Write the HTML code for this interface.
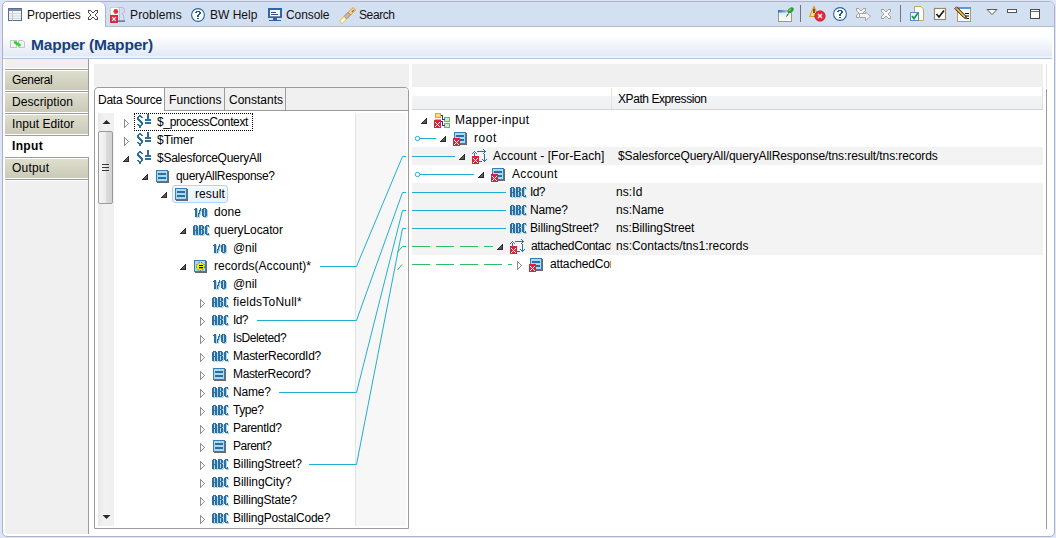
<!DOCTYPE html><html><head><meta charset="utf-8"><style>

*{margin:0;padding:0;box-sizing:border-box}
html,body{width:1056px;height:538px;overflow:hidden;background:#dfe5f5;font-family:"Liberation Sans", sans-serif;font-size:12px;color:#000}
.a{position:absolute}
.t{position:absolute;white-space:nowrap;line-height:18px;height:18px;font-size:12px;letter-spacing:-0.2px}

</style></head><body>

<svg width="0" height="0" style="position:absolute">
<defs>
<symbol id="eo" viewBox="0 0 6 6"><path d="M5 0h1v1h-1zM4 1h2v1h-2zM3 2h3v1h-3zM2 3h4v1h-4zM1 4h5v1h-5zM0 5h6v1h-6z" fill="#2a2a2a"/><path d="M4 2h1v1h-1zM3 3h2v1h-2zM2 4h3v1h-3z" fill="#5a5a5a"/></symbol>
<symbol id="ec" viewBox="0 0 5 9"><path d="M0 0h1v1h-1zM0 1h2v1h-2zM0 2h1v1h-1zM2 2h1v1h-1zM0 3h1v1h-1zM3 3h1v1h-1zM0 4h1v1h-1zM4 4h1v1h-1zM0 5h1v1h-1zM3 5h1v1h-1zM0 6h1v1h-1zM2 6h1v1h-1zM0 7h2v1h-2zM0 8h1v1h-1z" fill="#8e8e8e"/></symbol>
<symbol id="dol" viewBox="0 0 16 14"><path d="M3 1h2v1h-2zM2 2h4v1h-4zM1 3h2v1h-2zM5 3h2v1h-2zM1 4h2v1h-2zM1 5h3v1h-3zM2 6h3v1h-3zM3 7h3v1h-3zM4 8h3v1h-3zM5 9h2v1h-2zM1 10h2v1h-2zM5 10h2v1h-2zM2 11h4v1h-4zM3 12h2v1h-2zM3 13h2v1h-2z" fill="#2c6e9e"/><path d="M11 0h2v1h-2zM11 1h2v1h-2zM11 2h2v1h-2zM11 3h2v1h-2zM11 4h2v1h-2zM9 5h6v1h-6zM9 6h6v1h-6zM9 8h6v1h-6zM9 9h6v1h-6z" fill="#2c6e9e"/></symbol>
<symbol id="cx" viewBox="0 0 14 14" shape-rendering="crispEdges">
 <rect x="1" y="1" width="12" height="12" fill="#6a6a6a"/>
 <rect x="0" y="0" width="12" height="12" fill="#3a7db0"/>
 <rect x="1" y="1" width="10" height="10" fill="#a6daf5"/>
 <rect x="2" y="3" width="8" height="2" fill="#2e6d9c"/>
 <rect x="2" y="7" width="8" height="2" fill="#2e6d9c"/>
</symbol>
<symbol id="abc" viewBox="0 0 17 11"><path d="M2 1h3v1h-3zM7 1h4v1h-4zM14 1h3v1h-3zM1 2h2v1h-2zM4 2h2v1h-2zM7 2h2v1h-2zM10 2h2v1h-2zM13 2h2v1h-2zM16 2h1v1h-1zM1 3h2v1h-2zM4 3h2v1h-2zM7 3h2v1h-2zM10 3h2v1h-2zM13 3h2v1h-2zM1 4h2v1h-2zM4 4h2v1h-2zM7 4h2v1h-2zM10 4h2v1h-2zM13 4h2v1h-2zM1 5h2v1h-2zM4 5h2v1h-2zM7 5h4v1h-4zM13 5h2v1h-2zM1 6h5v1h-5zM7 6h2v1h-2zM10 6h2v1h-2zM13 6h2v1h-2zM1 7h2v1h-2zM4 7h2v1h-2zM7 7h2v1h-2zM10 7h2v1h-2zM13 7h2v1h-2zM1 8h2v1h-2zM4 8h2v1h-2zM7 8h2v1h-2zM10 8h2v1h-2zM13 8h2v1h-2zM1 9h2v1h-2zM4 9h2v1h-2zM7 9h2v1h-2zM10 9h2v1h-2zM13 9h2v1h-2zM16 9h1v1h-1zM1 10h2v1h-2zM4 10h2v1h-2zM7 10h4v1h-4zM14 10h3v1h-3z" fill="#a9d6ef"/><path d="M1 0h3v1h-3zM6 0h4v1h-4zM13 0h3v1h-3zM0 1h2v1h-2zM3 1h2v1h-2zM6 1h2v1h-2zM9 1h2v1h-2zM12 1h2v1h-2zM15 1h1v1h-1zM0 2h2v1h-2zM3 2h2v1h-2zM6 2h2v1h-2zM9 2h2v1h-2zM12 2h2v1h-2zM0 3h2v1h-2zM3 3h2v1h-2zM6 3h2v1h-2zM9 3h2v1h-2zM12 3h2v1h-2zM0 4h2v1h-2zM3 4h2v1h-2zM6 4h4v1h-4zM12 4h2v1h-2zM0 5h5v1h-5zM6 5h2v1h-2zM9 5h2v1h-2zM12 5h2v1h-2zM0 6h2v1h-2zM3 6h2v1h-2zM6 6h2v1h-2zM9 6h2v1h-2zM12 6h2v1h-2zM0 7h2v1h-2zM3 7h2v1h-2zM6 7h2v1h-2zM9 7h2v1h-2zM12 7h2v1h-2zM0 8h2v1h-2zM3 8h2v1h-2zM6 8h2v1h-2zM9 8h2v1h-2zM12 8h2v1h-2zM15 8h1v1h-1zM0 9h2v1h-2zM3 9h2v1h-2zM6 9h4v1h-4zM13 9h3v1h-3z" fill="#2f6f9f"/></symbol>
<symbol id="bool" viewBox="0 0 15 11"><path d="M2 1h2v1h-2zM7 1h1v1h-1zM10 1h3v1h-3zM1 2h3v1h-3zM7 2h1v1h-1zM9 2h2v1h-2zM12 2h2v1h-2zM2 3h2v1h-2zM6 3h2v1h-2zM9 3h2v1h-2zM12 3h2v1h-2zM2 4h2v1h-2zM6 4h1v1h-1zM9 4h2v1h-2zM12 4h2v1h-2zM2 5h2v1h-2zM6 5h1v1h-1zM9 5h2v1h-2zM12 5h2v1h-2zM2 6h2v1h-2zM5 6h2v1h-2zM9 6h2v1h-2zM12 6h2v1h-2zM2 7h2v1h-2zM5 7h1v1h-1zM9 7h2v1h-2zM12 7h2v1h-2zM2 8h2v1h-2zM5 8h1v1h-1zM9 8h2v1h-2zM12 8h2v1h-2zM2 9h2v1h-2zM5 9h1v1h-1zM10 9h3v1h-3z" fill="#a9d6ef"/><path d="M1 0h2v1h-2zM6 0h1v1h-1zM9 0h3v1h-3zM0 1h3v1h-3zM6 1h1v1h-1zM8 1h2v1h-2zM11 1h2v1h-2zM1 2h2v1h-2zM5 2h2v1h-2zM8 2h2v1h-2zM11 2h2v1h-2zM1 3h2v1h-2zM5 3h1v1h-1zM8 3h2v1h-2zM11 3h2v1h-2zM1 4h2v1h-2zM5 4h1v1h-1zM8 4h2v1h-2zM11 4h2v1h-2zM1 5h2v1h-2zM4 5h2v1h-2zM8 5h2v1h-2zM11 5h2v1h-2zM1 6h2v1h-2zM4 6h1v1h-1zM8 6h2v1h-2zM11 6h2v1h-2zM1 7h2v1h-2zM4 7h1v1h-1zM8 7h2v1h-2zM11 7h2v1h-2zM1 8h2v1h-2zM4 8h1v1h-1zM9 8h3v1h-3z" fill="#2f6f9f"/></symbol>
<symbol id="rec" viewBox="0 0 14 14">
 <rect x="1" y="1" width="12" height="12" fill="#6a6a6a"/>
 <rect x="0" y="0" width="12" height="12" fill="#3a7db0"/>
 <rect x="1" y="1" width="10" height="10" fill="#a6daf5"/>
 <circle cx="6.5" cy="6.5" r="4" fill="#f8f000" stroke="#1a2a80" stroke-width="0.7" stroke-dasharray="1.5 1.2"/>
 <rect x="5" y="5" width="4" height="1" fill="#000"/>
 <rect x="5" y="7" width="4" height="1.3" fill="#000"/>
</symbol>
<symbol id="xb" viewBox="0 0 7 8"><rect width="7" height="8" fill="#d7233c"/><path d="M1 2h1v1h-1zM5 2h1v1h-1zM2 3h1v1h-1zM4 3h1v1h-1zM3 4h1v1h-1zM2 5h1v1h-1zM4 5h1v1h-1zM1 6h1v1h-1zM5 6h1v1h-1z" fill="#fff"/></symbol>
<symbol id="fe" viewBox="0 0 16 15"><path d="M11 0h1v1h-1zM12 1h1v1h-1zM2 2h1v1h-1zM5 2h9v1h-9zM1 3h1v1h-1zM3 3h1v1h-1zM12 3h1v1h-1zM0 4h1v1h-1zM2 4h1v1h-1zM4 4h1v1h-1zM11 4h1v1h-1zM2 5h1v1h-1zM12 5h1v1h-1zM2 6h1v1h-1zM12 6h1v1h-1zM12 7h1v1h-1zM12 8h1v1h-1zM12 9h1v1h-1zM10 10h1v1h-1zM12 10h1v1h-1zM14 10h1v1h-1zM11 11h3v1h-3zM7 12h3v1h-3zM12 12h1v1h-1z" fill="#2f70a2"/></symbol>
</defs></svg>
<div class="a" style="left:2px;top:1px;width:1053px;height:536px;border:1px solid #aab3c9;border-radius:5px 6px 5px 5px;background:#fff"></div>
<div class="a" style="left:3px;top:2px;width:1051px;height:24px;background:#d2e0f1;border-radius:5px 5px 0 0"></div>
<div class="a" style="left:3px;top:26px;width:1051px;height:1px;background:#b3bccd"></div>
<div class="a" style="left:3px;top:2px;width:103px;height:25px;background:#fff;border-right:1px solid #aab3c9;border-radius:5px 6px 0 0"></div>
<svg class="a" style="left:8px;top:8px" width="15" height="14">
<rect x="0.5" y="0.5" width="13" height="12" fill="#f4f6f8" stroke="#5b6f8d"/>
<rect x="1" y="1" width="12" height="2" fill="#7a8aa4"/>
<path d="M1 5.5 H13 M1 8 H13 M1 10.5 H13" stroke="#d0d6de"/>
<path d="M4.5 3 V12.5" stroke="#c0c8d4"/>
</svg>
<div class="t" style="left:27px;top:6px;letter-spacing:-0.111px;color:#111">Properties</div>
<svg class="a" style="left:88px;top:10px" width="10" height="10"><path d="M0 0h3v1h-3zM7 0h3v1h-3zM0 1h1v1h-1zM3 1h1v1h-1zM6 1h1v1h-1zM9 1h1v1h-1zM0 2h1v1h-1zM4 2h2v1h-2zM9 2h1v1h-1zM1 3h1v1h-1zM8 3h1v1h-1zM2 4h1v1h-1zM7 4h1v1h-1zM2 5h1v1h-1zM7 5h1v1h-1zM1 6h1v1h-1zM8 6h1v1h-1zM0 7h1v1h-1zM4 7h2v1h-2zM9 7h1v1h-1zM0 8h1v1h-1zM3 8h1v1h-1zM6 8h1v1h-1zM9 8h1v1h-1zM0 9h3v1h-3zM7 9h3v1h-3z" fill="#4a4a4a"/></svg>
<svg class="a" style="left:109px;top:6px" width="17" height="17">
<path d="M1.5 10 V1.5 H12" fill="none" stroke="#b4a46a" stroke-width="1"/>
<rect x="1.5" y="1.5" width="8" height="7" fill="#fff"/>
<circle cx="6.8" cy="5.5" r="2.4" fill="#e8303a"/>
<path d="M10 1.5 H13 Q15.5 1.5 15.5 4.5 Q15.5 7.5 13 7.5 Q15 9 15 12 V14.5" fill="none" stroke="#a9bcd8" stroke-width="1"/>
<path d="M10.5 1.5 V15" stroke="#b9c8de" stroke-width="1"/>
<rect x="9" y="14.5" width="7" height="1.2" fill="#46587a"/>
<rect x="1" y="9" width="8" height="8" fill="#db2a40"/>
<path d="M3.2 11.2 L6.8 14.8 M6.8 11.2 L3.2 14.8" stroke="#fff" stroke-width="1.1"/>
</svg>
<div class="t" style="left:130px;top:6px;letter-spacing:0.143px;color:#111">Problems</div>
<svg class="a" style="left:190px;top:7px" width="16" height="16">
<circle cx="8" cy="8" r="6.4" fill="#fff" stroke="#2a64a0" stroke-width="1.1"/>
<path d="M6 4h4v1h-4zM5 5h2v1h-2zM9 5h2v1h-2zM9 6h2v1h-2zM8 7h2v1h-2zM7 8h2v1h-2zM7 9h2v1h-2zM7 11h2v1h-2z" fill="#1f5898"/>
</svg>
<div class="t" style="left:210px;top:6px;letter-spacing:0.0px;color:#111">BW Help</div>
<svg class="a" style="left:267px;top:7px" width="16" height="16" shape-rendering="crispEdges">
<rect x="1" y="1" width="14" height="10" rx="1" fill="#2f62b0"/>
<rect x="3" y="3" width="10" height="7" fill="#f2faff"/>
<rect x="3" y="9" width="10" height="1" fill="#7a8aa8"/>
<rect x="4" y="5" width="5" height="1" fill="#3a4a8a"/>
<rect x="4" y="7" width="7" height="1" fill="#3a4a8a"/>
<rect x="6" y="11" width="4" height="2" fill="#2f62b0"/>
<rect x="2" y="13" width="12" height="1" fill="#2f62b0"/>
</svg>
<div class="t" style="left:286px;top:6px;letter-spacing:-0.083px;color:#111">Console</div>
<svg class="a" style="left:338px;top:6px" width="18" height="18">
<polygon points="10,6.5 15,1.5 17.5,4 12.5,9" fill="#f9dc88" stroke="#e8961c" stroke-width="1"/>
<circle cx="15.2" cy="4.6" r="0.7" fill="#2a4a9a"/><circle cx="14.2" cy="5.6" r="0.7" fill="#2a4a9a"/>
<polygon points="6,10.5 10,6.5 12.5,9 8.5,13" fill="#c0b8c8" stroke="#a07a48" stroke-width="0.9"/>
<polygon points="1.5,15 6,10.5 8.5,13 4,17.5" fill="#fff6b0" stroke="#f0a428" stroke-width="0.8"/>
<polygon points="3,15.5 6,12.5 7,13.5 4.5,16.5" fill="#fff"/>
</svg>
<div class="t" style="left:359px;top:6px;letter-spacing:-0.4px;color:#111">Search</div>
<svg class="a" style="left:777px;top:6px" width="18" height="17">
<defs><linearGradient id="tb1" x1="0" x2="1"><stop offset="0" stop-color="#2f6fb8"/><stop offset="1" stop-color="#e6eef8"/></linearGradient>
<linearGradient id="wf1" x1="0" x2="0" y1="0" y2="1"><stop offset="0" stop-color="#d4eefb"/><stop offset="1" stop-color="#ffffff"/></linearGradient></defs>
<rect x="1.5" y="4.5" width="13" height="11" fill="url(#wf1)" stroke="#a89870"/>
<rect x="1" y="4" width="14" height="2.5" fill="url(#tb1)"/>
<path d="M9.5 10.5 L11.5 7.5" stroke="#303030" stroke-width="1"/>
<ellipse cx="13.6" cy="4.2" rx="3.6" ry="2.2" transform="rotate(-40 13.6 4.2)" fill="#2e9a2e"/>
<ellipse cx="13" cy="3.8" rx="1.6" ry="0.9" transform="rotate(-40 13 3.8)" fill="#6ad06a"/>
</svg>
<div class="a" style="left:800px;top:5px;width:1px;height:17px;background:#6c7480"></div>
<svg class="a" style="left:809px;top:5px" width="18" height="18">
<path d="M5 1.2 L9.3 11.5 H0.7 Z" fill="#fcdf86" stroke="#e09a28" stroke-width="1.1" stroke-linejoin="round"/>
<rect x="4.2" y="3.8" width="1.6" height="4.2" fill="#5a3a00"/>
<circle cx="11" cy="11" r="5.2" fill="#e8283a" stroke="#c41a2c" stroke-width="0.8"/>
<path d="M9 9 L13 13 M13 9 L9 13" stroke="#fff" stroke-width="1.3"/>
</svg>
<svg class="a" style="left:832px;top:6px" width="17" height="17">
<circle cx="8" cy="8" r="6.4" fill="#fff" stroke="#2a64a0" stroke-width="1.1"/>
<path d="M6 4h4v1h-4zM5 5h2v1h-2zM9 5h2v1h-2zM9 6h2v1h-2zM8 7h2v1h-2zM7 8h2v1h-2zM7 9h2v1h-2zM7 11h2v1h-2z" fill="#1f5898"/>
</svg>
<svg class="a" style="left:856px;top:8px" width="16" height="14">
<path d="M1 1H3L5 3L7 1H9V3L7 5L9 7V9H7L5 7L3 9H1V7L3 5L1 3Z" fill="#f8f8f8"/><path d="M0 0h3v1h-3zM7 0h3v1h-3zM0 1h1v1h-1zM3 1h1v1h-1zM6 1h1v1h-1zM9 1h1v1h-1zM0 2h1v1h-1zM4 2h2v1h-2zM9 2h1v1h-1zM1 3h1v1h-1zM8 3h1v1h-1zM2 4h1v1h-1zM7 4h1v1h-1zM2 5h1v1h-1zM7 5h1v1h-1zM1 6h1v1h-1zM8 6h1v1h-1zM0 7h1v1h-1zM4 7h2v1h-2zM9 7h1v1h-1zM0 8h1v1h-1zM3 8h1v1h-1zM6 8h1v1h-1zM9 8h1v1h-1zM0 9h3v1h-3zM7 9h3v1h-3z" fill="#a2a2a2"/>
<path d="M3.5 5.5 H9.5 V4 L14.5 8.3 L9.5 12.5 V9.5 H3.5 Z" fill="#f4f4f4" stroke="#a6a6a6" stroke-width="1"/>
</svg>
<svg class="a" style="left:881px;top:9px" width="10" height="10">
<path d="M1 1H3L5 3L7 1H9V3L7 5L9 7V9H7L5 7L3 9H1V7L3 5L1 3Z" fill="#f8f8f8"/><path d="M0 0h3v1h-3zM7 0h3v1h-3zM0 1h1v1h-1zM3 1h1v1h-1zM6 1h1v1h-1zM9 1h1v1h-1zM0 2h1v1h-1zM4 2h2v1h-2zM9 2h1v1h-1zM1 3h1v1h-1zM8 3h1v1h-1zM2 4h1v1h-1zM7 4h1v1h-1zM2 5h1v1h-1zM7 5h1v1h-1zM1 6h1v1h-1zM8 6h1v1h-1zM0 7h1v1h-1zM4 7h2v1h-2zM9 7h1v1h-1zM0 8h1v1h-1zM3 8h1v1h-1zM6 8h1v1h-1zM9 8h1v1h-1zM0 9h3v1h-3zM7 9h3v1h-3z" fill="#a2a2a2"/>
</svg>
<div class="a" style="left:900px;top:5px;width:1px;height:17px;background:#6c7480"></div>
<svg class="a" style="left:909px;top:5px" width="17" height="18">
<path d="M5.5 1.5 H12 L14.5 4 V15.5 H5.5 Z" fill="#fff" stroke="#c8a860" stroke-width="1"/>
<rect x="1.5" y="7.5" width="8" height="8" fill="#e8f2fb" stroke="#5a90c8" stroke-width="1"/>
<path d="M3 11 L5 13.5 L9 8" fill="none" stroke="#1a9a3a" stroke-width="1.8"/>
</svg>
<svg class="a" style="left:933px;top:7px" width="15" height="15">
<rect x="1.5" y="1.5" width="11" height="11" fill="#fff" stroke="#9a8a60" stroke-width="1.2"/>
<path d="M3.5 7 L6 10 L11 3.5" fill="none" stroke="#111" stroke-width="1.6"/>
</svg>
<svg class="a" style="left:954px;top:6px" width="19" height="17">
<rect x="3.5" y="1.5" width="13" height="14" fill="#f6fbff" stroke="#b49a60" stroke-width="1"/>
<rect x="3" y="1" width="14" height="2" fill="#5a9ad8"/>
<path d="M11 7.5 H15 M12 10 H15 M13 12.5 H15" stroke="#111" stroke-width="1.1"/>
<path d="M0.8 2.6 L2.6 0.8 L11.8 10 L12.5 12.5 L10 11.8 Z" fill="#f2a020" stroke="#111" stroke-width="0.9" stroke-linejoin="round"/>
<path d="M2 2 L11 11" stroke="#fbe070" stroke-width="0.8"/>
<path d="M0.8 2.6 L2.6 0.8 L3.6 1.8 L1.8 3.6 Z" fill="#e86a8a"/>
</svg>
<svg class="a" style="left:986px;top:8px" width="12" height="8"><path d="M1 1.5 H11 L6 6.5 Z" fill="#fff" stroke="#5a5a5a" stroke-width="1"/></svg>
<div class="a" style="left:1007px;top:9px;width:10px;height:4px;border:1px solid #555;background:#fff"></div>
<div class="a" style="left:1030px;top:9px;width:10px;height:10px;border:1px solid #4a4a4a;background:#fff;box-shadow:inset 0 1px 0 #fff,inset 0 2px 0 #6a6a6a"></div>
<div class="a" style="left:3px;top:27px;width:1049px;height:31px;background:linear-gradient(#fff 0px,#fff 8px,#e3eaf5 29px,#f4f7fb 30px)"></div>
<div class="a" style="left:3px;top:58px;width:1049px;height:1px;background:#afc4de"></div>
<svg class="a" style="left:10px;top:40px" width="15" height="8">
<rect x="0.5" y="0.5" width="6" height="7" fill="#f4f4f4" stroke="#c4c4c4"/>
<path d="M8.5 0.5 H13 L14.5 2 V7.5 H8.5 Z" fill="#f4f4f4" stroke="#c4c4c4"/>
<path d="M5 2.3 L9.5 5.2" stroke="#2ad42a" stroke-width="2.6" fill="none" stroke-linecap="round"/>
</svg>
<div class="a" style="left:31px;top:34px;line-height:22px;font-size:15.5px;font-weight:bold;color:#173f7c;letter-spacing:-0.2px;white-space:nowrap">Mapper (Mapper)</div>
<div class="a" style="left:5px;top:59px;width:83px;height:9px;background:#f0f0f0"></div>
<div class="a" style="left:5px;top:69px;width:84px;height:23px;border:1px solid #9c9c9c;border-left:0;background:#fff"></div>
<div class="a" style="left:5px;top:71px;width:83px;height:19px;background:linear-gradient(#dedecc,#cbcab9)"></div>
<div class="t" style="left:12px;top:71px;letter-spacing:-0.333px;">General</div>
<div class="a" style="left:5px;top:91px;width:84px;height:23px;border:1px solid #9c9c9c;border-left:0;background:#fff"></div>
<div class="a" style="left:5px;top:93px;width:83px;height:19px;background:linear-gradient(#dedecc,#cbcab9)"></div>
<div class="t" style="left:12px;top:93px;letter-spacing:0.09px;">Description</div>
<div class="a" style="left:5px;top:113px;width:84px;height:23px;border:1px solid #9c9c9c;border-left:0;background:#fff"></div>
<div class="a" style="left:5px;top:115px;width:83px;height:19px;background:linear-gradient(#dedecc,#cbcab9)"></div>
<div class="t" style="left:12px;top:115px;letter-spacing:0.082px;">Input Editor</div>
<div class="t" style="left:12px;top:137px;font-weight:bold;letter-spacing:0.35px">Input</div>
<div class="a" style="left:5px;top:157px;width:84px;height:23px;border:1px solid #9c9c9c;border-left:0;background:#fff"></div>
<div class="a" style="left:5px;top:159px;width:83px;height:19px;background:linear-gradient(#dedecc,#cbcab9)"></div>
<div class="t" style="left:12px;top:159px;letter-spacing:0.2px;">Output</div>
<div class="a" style="left:5px;top:181px;width:83px;height:353px;background:#f0f0f0;border-bottom-left-radius:3px"></div>
<div class="a" style="left:88px;top:59px;width:1px;height:76px;background:#9c9c9c"></div>
<div class="a" style="left:88px;top:157px;width:1px;height:377px;background:#9c9c9c"></div>
<div class="a" style="left:94px;top:64px;width:315px;height:23px;background:#f0f0f0"></div>
<div class="a" style="left:94px;top:87px;width:315px;height:442px;border:1px solid #9c9c9c;border-radius:4px 4px 0 0;background:#fff"></div>
<div class="a" style="left:164px;top:88px;width:244px;height:22px;background:#f0f0f0;border-top-right-radius:3px"></div>
<div class="a" style="left:164px;top:110px;width:244px;height:1px;background:#9c9c9c"></div>
<div class="a" style="left:164px;top:88px;width:1px;height:22px;background:#9c9c9c"></div>
<div class="a" style="left:224px;top:88px;width:1px;height:22px;background:#9c9c9c"></div>
<div class="a" style="left:285px;top:88px;width:1px;height:22px;background:#9c9c9c"></div>
<div class="t" style="left:98px;top:91px;letter-spacing:-0.25px;">Data Source</div>
<div class="t" style="left:169px;top:91px;letter-spacing:0.062px;">Functions</div>
<div class="t" style="left:229px;top:91px;letter-spacing:0.0px;">Constants</div>
<div class="a" style="left:98px;top:113px;width:16px;height:413px;background:linear-gradient(90deg,#e8e8e8,#f2f2f2 40%,#f0f0f0)"></div>
<svg class="a" style="left:102px;top:119px" width="9" height="6"><path d="M0.5 5 L4.5 1 L8.5 5 Z" fill="#2a2a2a"/></svg>
<svg class="a" style="left:102px;top:514px" width="9" height="6"><path d="M0.5 1 L4.5 5 L8.5 1 Z" fill="#2a2a2a"/></svg>
<div class="a" style="left:98px;top:131px;width:15px;height:73px;border:1px solid #9a9a9a;border-radius:2px;background:linear-gradient(90deg,#f6f6f6,#ececec 50%,#dcdcdc 50%,#d2d2d2)"></div>
<div class="a" style="left:102px;top:164px;width:7px;height:1px;background:#3a3a3a;box-shadow:0 3px 0 #3a3a3a,0 6px 0 #3a3a3a"></div>
<div class="a" style="left:355px;top:113px;width:51px;height:413px;background:#f7f7f7;border-left:1px solid #e2e2e2"></div>
<div class="a" style="left:114px;top:111px;width:241px;height:415px;overflow:hidden">
<div class="a" style="left:20px;top:2px;width:119px;height:18px;border:1px dotted #000"></div>
<svg style="position:absolute;left:10px;top:8px" width="5" height="9"><use href="#ec"/></svg>
<svg style="position:absolute;left:22px;top:3px" width="16" height="14"><use href="#dol"/></svg>
<div class="t" style="left:43px;top:2px;letter-spacing:-0.353px;">$_processContext</div>
<svg style="position:absolute;left:10px;top:26px" width="5" height="9"><use href="#ec"/></svg>
<svg style="position:absolute;left:22px;top:21px" width="16" height="14"><use href="#dol"/></svg>
<div class="t" style="left:43px;top:20px;letter-spacing:-0.04px;">$Timer</div>
<svg style="position:absolute;left:9px;top:45px" width="6" height="6"><use href="#eo"/></svg>
<svg style="position:absolute;left:22px;top:39px" width="16" height="14"><use href="#dol"/></svg>
<div class="t" style="left:43px;top:38px;letter-spacing:-0.256px;">$SalesforceQueryAll</div>
<svg style="position:absolute;left:28px;top:63px" width="6" height="6"><use href="#eo"/></svg>
<svg style="position:absolute;left:42px;top:59px" width="14" height="14"><use href="#cx"/></svg>
<div class="t" style="left:62px;top:56px;letter-spacing:-0.319px;">queryAllResponse?</div>
<div class="a" style="left:58px;top:74px;width:56px;height:18px;border:1px solid #b3d3f7;border-radius:3px;background:linear-gradient(#f6faff,#e9f2fd)"></div>
<svg style="position:absolute;left:47px;top:81px" width="6" height="6"><use href="#eo"/></svg>
<svg style="position:absolute;left:61px;top:77px" width="14" height="14"><use href="#cx"/></svg>
<div class="t" style="left:81px;top:74px;letter-spacing:0.08px;">result</div>
<svg style="position:absolute;left:80px;top:97px" width="15" height="11"><use href="#bool"/></svg>
<div class="t" style="left:100px;top:92px;letter-spacing:0.1px;">done</div>
<svg style="position:absolute;left:66px;top:117px" width="6" height="6"><use href="#eo"/></svg>
<svg style="position:absolute;left:79px;top:114px" width="17" height="11"><use href="#abc"/></svg>
<div class="t" style="left:100px;top:110px;letter-spacing:-0.1px;">queryLocator</div>
<svg style="position:absolute;left:99px;top:133px" width="15" height="11"><use href="#bool"/></svg>
<div class="t" style="left:119px;top:128px;letter-spacing:-0.1px;">@nil</div>
<svg style="position:absolute;left:66px;top:153px" width="6" height="6"><use href="#eo"/></svg>
<svg style="position:absolute;left:80px;top:149px" width="14" height="14"><use href="#rec"/></svg>
<div class="t" style="left:100px;top:146px;letter-spacing:0.062px;">records(Account)*</div>
<svg style="position:absolute;left:99px;top:169px" width="15" height="11"><use href="#bool"/></svg>
<div class="t" style="left:119px;top:164px;letter-spacing:-0.1px;">@nil</div>
<svg style="position:absolute;left:86px;top:188px" width="5" height="9"><use href="#ec"/></svg>
<svg style="position:absolute;left:98px;top:186px" width="17" height="11"><use href="#abc"/></svg>
<div class="t" style="left:119px;top:182px;letter-spacing:0.217px;">fieldsToNull*</div>
<svg style="position:absolute;left:86px;top:206px" width="5" height="9"><use href="#ec"/></svg>
<svg style="position:absolute;left:98px;top:204px" width="17" height="11"><use href="#abc"/></svg>
<div class="t" style="left:119px;top:200px;letter-spacing:-0.65px;">Id?</div>
<svg style="position:absolute;left:86px;top:224px" width="5" height="9"><use href="#ec"/></svg>
<svg style="position:absolute;left:99px;top:223px" width="15" height="11"><use href="#bool"/></svg>
<div class="t" style="left:119px;top:218px;letter-spacing:-0.422px;">IsDeleted?</div>
<svg style="position:absolute;left:86px;top:242px" width="5" height="9"><use href="#ec"/></svg>
<svg style="position:absolute;left:98px;top:240px" width="17" height="11"><use href="#abc"/></svg>
<div class="t" style="left:119px;top:236px;letter-spacing:-0.271px;">MasterRecordId?</div>
<svg style="position:absolute;left:86px;top:260px" width="5" height="9"><use href="#ec"/></svg>
<svg style="position:absolute;left:99px;top:257px" width="14" height="14"><use href="#cx"/></svg>
<div class="t" style="left:119px;top:254px;letter-spacing:-0.35px;">MasterRecord?</div>
<svg style="position:absolute;left:86px;top:278px" width="5" height="9"><use href="#ec"/></svg>
<svg style="position:absolute;left:98px;top:276px" width="17" height="11"><use href="#abc"/></svg>
<div class="t" style="left:119px;top:272px;letter-spacing:-0.175px;">Name?</div>
<svg style="position:absolute;left:86px;top:296px" width="5" height="9"><use href="#ec"/></svg>
<svg style="position:absolute;left:98px;top:294px" width="17" height="11"><use href="#abc"/></svg>
<div class="t" style="left:119px;top:290px;letter-spacing:-0.425px;">Type?</div>
<svg style="position:absolute;left:86px;top:314px" width="5" height="9"><use href="#ec"/></svg>
<svg style="position:absolute;left:98px;top:312px" width="17" height="11"><use href="#abc"/></svg>
<div class="t" style="left:119px;top:308px;letter-spacing:-0.375px;">ParentId?</div>
<svg style="position:absolute;left:86px;top:332px" width="5" height="9"><use href="#ec"/></svg>
<svg style="position:absolute;left:99px;top:329px" width="14" height="14"><use href="#cx"/></svg>
<div class="t" style="left:119px;top:326px;letter-spacing:-0.5px;">Parent?</div>
<svg style="position:absolute;left:86px;top:350px" width="5" height="9"><use href="#ec"/></svg>
<svg style="position:absolute;left:98px;top:348px" width="17" height="11"><use href="#abc"/></svg>
<div class="t" style="left:119px;top:344px;letter-spacing:-0.146px;">BillingStreet?</div>
<svg style="position:absolute;left:86px;top:368px" width="5" height="9"><use href="#ec"/></svg>
<svg style="position:absolute;left:98px;top:366px" width="17" height="11"><use href="#abc"/></svg>
<div class="t" style="left:119px;top:362px;letter-spacing:-0.073px;">BillingCity?</div>
<svg style="position:absolute;left:86px;top:386px" width="5" height="9"><use href="#ec"/></svg>
<svg style="position:absolute;left:98px;top:384px" width="17" height="11"><use href="#abc"/></svg>
<div class="t" style="left:119px;top:380px;letter-spacing:-0.208px;">BillingState?</div>
<svg style="position:absolute;left:86px;top:404px" width="5" height="9"><use href="#ec"/></svg>
<svg style="position:absolute;left:98px;top:402px" width="17" height="11"><use href="#abc"/></svg>
<div class="t" style="left:119px;top:398px;letter-spacing:-0.188px;">BillingPostalCode?</div>
</div>
<div class="a" style="left:412px;top:64px;width:631px;height:23px;background:#f0f0f0"></div>
<div class="a" style="left:412px;top:87px;width:631px;height:23px;background:linear-gradient(#fff 0px,#fff 9px,#f3f4f6 9px,#eef0f2 22px);border-bottom:1px solid #d5d5d5;border-right:1px solid #e0e0e0"></div>
<div class="a" style="left:611px;top:88px;width:1px;height:21px;background:#e3e3e3"></div>
<div class="t" style="left:618px;top:90px;letter-spacing:-0.433px;">XPath Expression</div>
<div class="a" style="left:1046px;top:64px;width:1px;height:24px;background:#e6e6e6"></div>
<div class="a" style="left:1046px;top:89px;width:1px;height:440px;background:#9c9c9c"></div>
<div class="a" style="left:412px;top:147px;width:631px;height:18px;background:#f3f3f3"></div>
<div class="a" style="left:412px;top:183px;width:631px;height:18px;background:#f3f3f3"></div>
<div class="a" style="left:412px;top:201px;width:631px;height:18px;background:#f3f3f3"></div>
<div class="a" style="left:412px;top:219px;width:631px;height:18px;background:#f3f3f3"></div>
<div class="a" style="left:412px;top:237px;width:631px;height:18px;background:#f3f3f3"></div>
<div class="a" style="left:412px;top:110px;width:199px;height:420px;overflow:hidden">
<svg style="position:absolute;left:9px;top:8px" width="6" height="6"><use href="#eo"/></svg>
<svg class="a" style="left:22px;top:3px" width="17" height="16" shape-rendering="crispEdges">
<rect x="1" y="0" width="6" height="5" fill="#d9a441"/><rect x="2" y="1" width="4" height="3" fill="#fbe07a"/>
<rect x="10" y="4" width="6" height="5" fill="#78ab78"/><rect x="11" y="5" width="4" height="3" fill="#c6ecc6"/>
<rect x="10" y="10" width="6" height="5" fill="#78ab78"/><rect x="11" y="11" width="4" height="3" fill="#c6ecc6"/>
<path d="M7 2h2v4h2v1h-3v-4h-1z" fill="#1c3a90"/>
<path d="M7 8h2v4h2v1h-3v-4h-1z" fill="#1c3a90"/>
<rect x="1" y="6" width="6" height="1" fill="#e0b040"/>
<use href="#xb" x="0" y="7" width="7" height="8"/>
</svg>
<div class="t" style="left:43px;top:1px;letter-spacing:0.3px;">Mapper-input</div>
<svg style="position:absolute;left:28px;top:26px" width="6" height="6"><use href="#eo"/></svg>
<svg style="position:absolute;left:42px;top:22px" width="14" height="14"><use href="#cx"/></svg>
<svg style="position:absolute;left:41px;top:28px" width="7" height="8"><use href="#xb"/></svg>
<div class="t" style="left:62px;top:19px;letter-spacing:0.567px;">root</div>
<svg style="position:absolute;left:47px;top:44px" width="6" height="6"><use href="#eo"/></svg>
<svg style="position:absolute;left:60px;top:39px" width="16" height="15"><use href="#fe"/></svg>
<svg style="position:absolute;left:60px;top:46px" width="7" height="8"><use href="#xb"/></svg>
<div class="t" style="left:81px;top:37px;letter-spacing:0.068px;">Account - [For-Each]</div>
<svg style="position:absolute;left:66px;top:62px" width="6" height="6"><use href="#eo"/></svg>
<svg style="position:absolute;left:80px;top:58px" width="14" height="14"><use href="#cx"/></svg>
<svg style="position:absolute;left:79px;top:64px" width="7" height="8"><use href="#xb"/></svg>
<div class="t" style="left:100px;top:55px;letter-spacing:0.333px;">Account</div>
<svg style="position:absolute;left:98px;top:77px" width="17" height="11"><use href="#abc"/></svg>
<div class="t" style="left:118px;top:73px;letter-spacing:-0.65px;">Id?</div>
<svg style="position:absolute;left:98px;top:95px" width="17" height="11"><use href="#abc"/></svg>
<div class="t" style="left:118px;top:91px;letter-spacing:-0.175px;">Name?</div>
<svg style="position:absolute;left:98px;top:113px" width="17" height="11"><use href="#abc"/></svg>
<div class="t" style="left:118px;top:109px;letter-spacing:-0.146px;">BillingStreet?</div>
<svg style="position:absolute;left:85px;top:134px" width="6" height="6"><use href="#eo"/></svg>
<svg style="position:absolute;left:98px;top:129px" width="16" height="15"><use href="#fe"/></svg>
<svg style="position:absolute;left:98px;top:136px" width="7" height="8"><use href="#xb"/></svg>
<div class="t" style="left:119px;top:127px;letter-spacing:-0.358px;">attachedContacts</div>
<svg style="position:absolute;left:105px;top:151px" width="5" height="9"><use href="#ec"/></svg>
<svg style="position:absolute;left:118px;top:148px" width="14" height="14"><use href="#cx"/></svg>
<svg style="position:absolute;left:117px;top:154px" width="7" height="8"><use href="#xb"/></svg>
<div class="t" style="left:138px;top:145px;letter-spacing:-0.156px;">attachedContact</div>
</div>
<div class="t" style="left:618px;top:147px;letter-spacing:-0.086px;">$SalesforceQueryAll/queryAllResponse/tns:result/tns:records</div>
<div class="t" style="left:616px;top:183px;letter-spacing:0.1px;">ns:Id</div>
<div class="t" style="left:616px;top:201px;letter-spacing:0.0px;">ns:Name</div>
<div class="t" style="left:616px;top:219px;letter-spacing:-0.113px;">ns:BillingStreet</div>
<div class="t" style="left:616px;top:237px;letter-spacing:-0.013px;">ns:Contacts/tns1:records</div>
<svg class="a" style="left:0;top:0" width="1056" height="538"><polyline points="320.0,266.5 356.5,266.5 402.5,156.5 406,156.5" fill="none" stroke="#22aed2" stroke-width="1"/><polyline points="257,320.5 356.5,320.5 402.5,192.5 406,192.5" fill="none" stroke="#22aed2" stroke-width="1"/><polyline points="279,392.5 356.5,392.5 402.5,210.5 406,210.5" fill="none" stroke="#22aed2" stroke-width="1"/><polyline points="309,464.5 356.5,464.5 402.5,228.5 406,228.5" fill="none" stroke="#22aed2" stroke-width="1"/><polyline points="412,156.5 455,156.5" fill="none" stroke="#22aed2" stroke-width="1"/><polyline points="412,192.5 506,192.5" fill="none" stroke="#22aed2" stroke-width="1"/><polyline points="412,210.5 506,210.5" fill="none" stroke="#22aed2" stroke-width="1"/><polyline points="412,228.5 506,228.5" fill="none" stroke="#22aed2" stroke-width="1"/><circle cx="417.5" cy="138.5" r="2.2" fill="#fff" stroke="#22aed2"/><path d="M419.7 138.5 H436" stroke="#22aed2"/><circle cx="417.5" cy="174.5" r="2.2" fill="#fff" stroke="#22aed2"/><path d="M419.7 174.5 H474" stroke="#22aed2"/><path d="M412 246.5 H493" stroke="#2cc063" stroke-dasharray="18 6"/><path d="M412 264.5 H512" stroke="#2cc063" stroke-dasharray="18 6"/><path d="M397.5 252 L402.5 246.5 H406" stroke="#2cc063" fill="none"/><path d="M397.5 270 L402 264.5" stroke="#2cc063" fill="none"/></svg>
</body></html>
